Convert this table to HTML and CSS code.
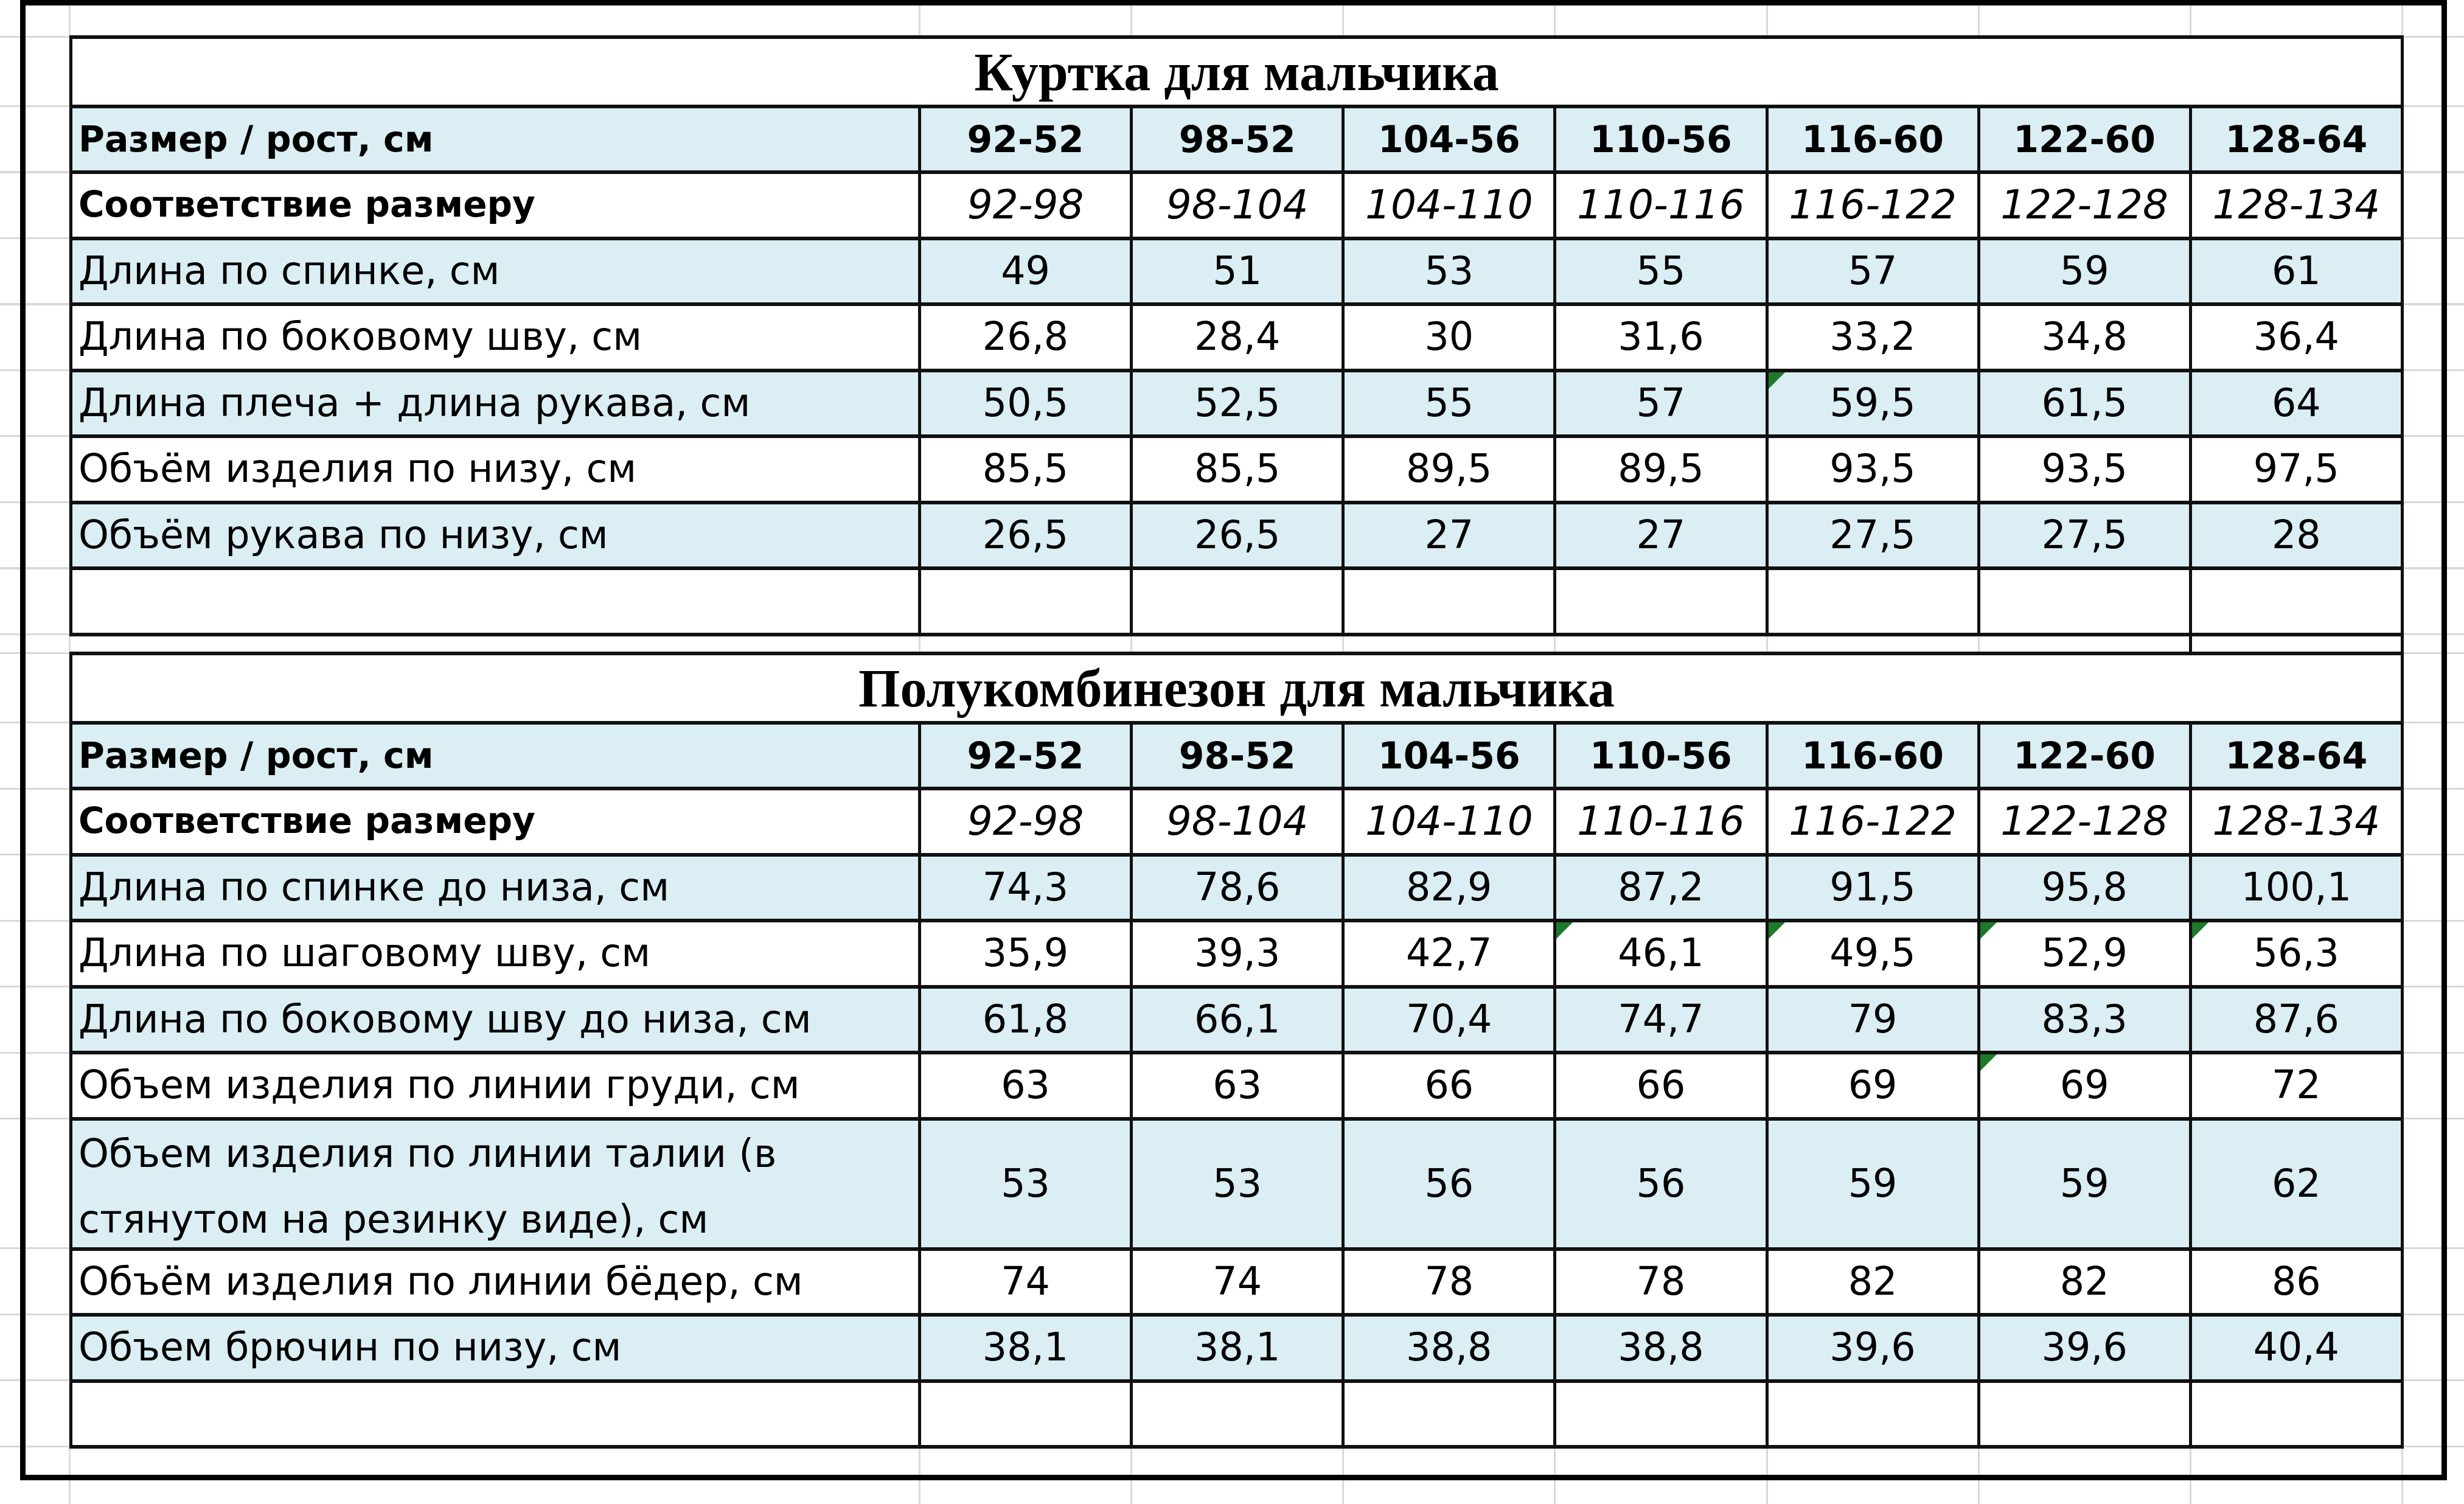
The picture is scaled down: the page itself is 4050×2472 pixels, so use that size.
FILE: index.html
```html
<!DOCTYPE html>
<html lang="ru">
<head>
<meta charset="utf-8">
<title>Размеры</title>
<link rel="stylesheet" href="styles.css">
</head>
<body>
<div class="sheet">
<table class="sizes">
<colgroup>
<col class="c-label">
<col class="c-val"><col class="c-val"><col class="c-val"><col class="c-val"><col class="c-val"><col class="c-val"><col class="c-val">
</colgroup>
<tbody>
<tr class="title"><td colspan="8">Куртка для мальчика</td></tr>
<tr class="head blue"><td class="label">Размер / рост, см</td><td>92-52</td><td>98-52</td><td>104-56</td><td>110-56</td><td>116-60</td><td>122-60</td><td>128-64</td></tr>
<tr class="match"><td class="label">Соответствие размеру</td><td>92-98</td><td>98-104</td><td>104-110</td><td>110-116</td><td>116-122</td><td>122-128</td><td>128-134</td></tr>
<tr class="blue"><td class="label">Длина по спинке, см</td><td>49</td><td>51</td><td>53</td><td>55</td><td>57</td><td>59</td><td>61</td></tr>
<tr><td class="label">Длина по боковому шву, см</td><td>26,8</td><td>28,4</td><td>30</td><td>31,6</td><td>33,2</td><td>34,8</td><td>36,4</td></tr>
<tr class="blue"><td class="label">Длина плеча + длина рукава, см</td><td>50,5</td><td>52,5</td><td>55</td><td>57</td><td class="flag">59,5</td><td>61,5</td><td>64</td></tr>
<tr><td class="label">Объём изделия по низу, см</td><td>85,5</td><td>85,5</td><td>89,5</td><td>89,5</td><td>93,5</td><td>93,5</td><td>97,5</td></tr>
<tr class="blue"><td class="label">Объём рукава по низу, см</td><td>26,5</td><td>26,5</td><td>27</td><td>27</td><td>27,5</td><td>27,5</td><td>28</td></tr>
<tr class="empty"><td></td><td></td><td></td><td></td><td></td><td></td><td></td><td></td></tr>
<tr class="gap"><td colspan="7"></td><td class="gap-end"></td></tr>
<tr class="title"><td colspan="8">Полукомбинезон для мальчика</td></tr>
<tr class="head blue"><td class="label">Размер / рост, см</td><td>92-52</td><td>98-52</td><td>104-56</td><td>110-56</td><td>116-60</td><td>122-60</td><td>128-64</td></tr>
<tr class="match"><td class="label">Соответствие размеру</td><td>92-98</td><td>98-104</td><td>104-110</td><td>110-116</td><td>116-122</td><td>122-128</td><td>128-134</td></tr>
<tr class="blue"><td class="label">Длина по спинке до низа, см</td><td>74,3</td><td>78,6</td><td>82,9</td><td>87,2</td><td>91,5</td><td>95,8</td><td>100,1</td></tr>
<tr><td class="label">Длина по шаговому шву, см</td><td>35,9</td><td>39,3</td><td>42,7</td><td class="flag">46,1</td><td class="flag">49,5</td><td class="flag">52,9</td><td class="flag">56,3</td></tr>
<tr class="blue"><td class="label">Длина по боковому шву до низа, см</td><td>61,8</td><td>66,1</td><td>70,4</td><td>74,7</td><td>79</td><td>83,3</td><td>87,6</td></tr>
<tr><td class="label">Объем изделия по линии груди, см</td><td>63</td><td>63</td><td>66</td><td>66</td><td>69</td><td class="flag">69</td><td>72</td></tr>
<tr class="blue tall"><td class="label wrap"><div class="wrap-text">Объем изделия по линии талии (в<br>стянутом на резинку виде), см</div></td><td>53</td><td>53</td><td>56</td><td>56</td><td>59</td><td>59</td><td>62</td></tr>
<tr><td class="label">Объём изделия по линии бёдер, см</td><td>74</td><td>74</td><td>78</td><td>78</td><td>82</td><td>82</td><td>86</td></tr>
<tr class="blue"><td class="label">Объем брючин по низу, см</td><td>38,1</td><td>38,1</td><td>38,8</td><td>38,8</td><td>39,6</td><td>39,6</td><td>40,4</td></tr>
<tr class="empty"><td></td><td></td><td></td><td></td><td></td><td></td><td></td><td></td></tr>
</tbody>
</table>
</div>
</body>
</html>
```
FILE: styles.css
```css
html, body {
  margin: 0;
  padding: 0;
}

body {
  width: 4050px;
  height: 2472px;
  overflow: hidden;
  font-family: "DejaVu Sans", "Noto Sans", sans-serif;
  color: #000;
  background-color: #fff;
  background-image:
    linear-gradient(to right, transparent 113px, #d9d9d9 113px, #d9d9d9 116px, transparent 116px),
    repeating-linear-gradient(to right, #d9d9d9 0 3px, transparent 3px 348.14px),
    linear-gradient(to bottom, #d9d9d9 0 3px, transparent 3px),
    repeating-linear-gradient(to bottom, #d9d9d9 0 3px, transparent 3px 108.5px),
    linear-gradient(to bottom, #d9d9d9 0 3px, transparent 3px),
    repeating-linear-gradient(to bottom, #d9d9d9 0 3px, transparent 3px 108.5px),
    repeating-linear-gradient(to bottom, #d9d9d9 0 3px, transparent 3px 108.5px);
  background-size: 100% 100%, 2440px 100%, 100% 10px, 100% 880px, 100% 10px, 100% 660px, 100% 424px;
  background-position: 0 0, 1509.5px 0, 0 59px, 0 172.5px, 0 1072px, 0 1185.5px, 0 2050px;
  background-repeat: no-repeat;
}

.sheet {
  box-sizing: border-box;
  width: 3989px;
  height: 2433px;
  margin-left: 33px;
  border: 9px solid #000;
}

.sizes {
  border-collapse: collapse;
  table-layout: fixed;
  width: 3835px;
  margin: 49px 0 0 72px;
}

.c-label { width: 1395px; }
.c-val { width: 348.14px; }

.sizes tr { height: 108.5px; }
.sizes tr.title { height: 113.5px; }
.sizes tr.tall { height: 214px; }
.sizes tr.gap { height: 31.5px; }

.sizes td {
  border-top: 6px solid #111;
  border-bottom: 6px solid #111;
  border-left: 5px solid #111;
  border-right: 5px solid #111;
  background: #fff;
  padding: 0;
  text-align: center;
  vertical-align: middle;
  font-size: 63.5px;
  line-height: 1.1;
  white-space: nowrap;
  position: relative;
}

.sizes tr.blue td { background: #daeef3; }

.sizes td.label {
  text-align: left;
  padding-left: 10px;
}

.sizes td.wrap {
  white-space: normal;
  vertical-align: top;
}

.wrap-text {
  line-height: 108px;
  height: 216px;
  margin-top: 0;
  margin-bottom: -16px;
}

.sizes tr.title td {
  font-family: "Liberation Serif", "DejaVu Serif", serif;
  font-weight: bold;
  font-size: 88px;
  text-align: center;
  padding-top: 4px;
}

.sizes tr.head td {
  font-weight: bold;
  font-size: 60px;
}

.sizes tr.head td.label {
  font-size: 58.5px;
}

.sizes tr.match td {
  font-style: italic;
  font-size: 66px;
}

.sizes tr.match td.label {
  font-style: normal;
  font-weight: bold;
  font-size: 58px;
}

.sizes tr.gap td {
  background: transparent;
  border-top: none;
  border-bottom: none;
  border-left: none;
  border-right: none;
}

.sizes tr.gap td.gap-end {
  border-left: 5px solid #111;
  border-right: 5px solid #111;
}

.sizes td.flag::before {
  content: "";
  position: absolute;
  top: 0;
  left: 0;
  width: 0;
  height: 0;
  border-top: 27px solid #1d7a2a;
  border-right: 27px solid transparent;
}
```
